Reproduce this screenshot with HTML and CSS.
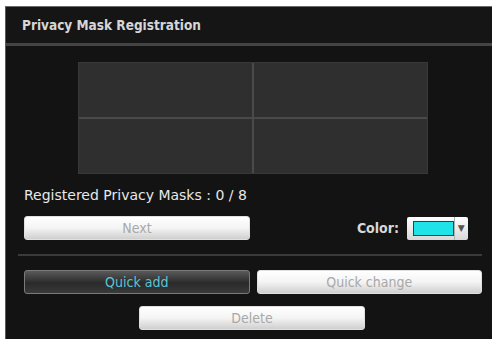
FILE: index.html
```html
<!DOCTYPE html>
<html lang="en">
<head>
    <meta charset="UTF-8">
    <title>Privacy Mask Registration</title>
    <link rel="stylesheet" href="styles.css">
</head>
<body>
    <div class="panel">
        <div class="panel-header">Privacy Mask Registration</div>
        <div class="panel-body">
            <div class="preview">
                <div class="cell"></div>
                <div class="cell"></div>
                <div class="cell"></div>
                <div class="cell"></div>
            </div>

            <div class="count">Registered Privacy Masks : 0 / 8</div>

            <div class="row">
                <button class="btn light wide" disabled>Next</button>
                <div class="color-group">
                    <span class="color-label">Color:</span>
                    <div class="color-select">
                        <span class="swatch"></span>
                        <span class="arrow">&#9660;</span>
                    </div>
                </div>
            </div>

            <div class="divider"></div>

            <div class="row">
                <button class="btn dark wide">Quick add</button>
                <button class="btn light wide" disabled>Quick change</button>
            </div>
            <div class="row center">
                <button class="btn light wide" disabled>Delete</button>
            </div>
        </div>
    </div>
</body>
</html>
```

FILE: styles.css
```css
body {
    margin: 0;
    padding: 6px 0 0 5px;
    background-color: #ffffff;
    font-family: "DejaVu Sans", sans-serif;
}
.panel {
    background-color: #131313;
    border-left: 1px solid #5a5a5a;
    border-top: 1px solid #6a6a6a;
    height: 333px;
    box-sizing: border-box;
}
.panel-header {
    height: 36px;
    line-height: 36px;
    padding-left: 16px;
    font-family: "DejaVu Sans Condensed", sans-serif;
    font-weight: bold;
    font-size: 13.5px;
    color: #d6d6d6;
    background-color: #151515;
    border-bottom: 3px solid #444;
}
.panel-body {
    padding: 16px 10px 0 18px;
}
.preview {
    width: 348px;
    height: 110px;
    margin-left: 54px;
    display: grid;
    grid-template-columns: 1fr 1fr;
    grid-template-rows: 1fr 1fr;
    gap: 2px;
    background-color: #4a4a4a;
    border: 1px solid #383838;
}
.cell {
    background-color: #2f2f2f;
}
.count {
    margin-top: 13px;
    font-size: 14px;
    color: #e8e8e8;
}
.row {
    display: flex;
    align-items: center;
    gap: 7px;
    margin-top: 13px;
}
.row.center {
    justify-content: center;
    margin-top: 12px;
    padding-right: 2px;
}
.btn {
    height: 24px;
    border-radius: 3px;
    font-family: "DejaVu Sans Condensed", sans-serif;
    font-size: 14px;
    padding: 0;
}
.btn.wide {
    width: 226px;
}
.btn.light {
    color: #a8a8a8;
    border: 1px solid #e0e0e0;
    background: linear-gradient(to bottom, #ffffff 0%, #f4f4f4 50%, #cfcfcf 100%);
}
.btn.dark {
    color: #5cc4d6;
    border: 1px solid #7a7a7a;
    background: linear-gradient(to bottom, #5a5a5a 0%, #2a2a2a 55%, #3a3a3a 100%);
}
.color-group {
    margin-left: auto;
    display: flex;
    align-items: center;
    gap: 8px;
    margin-right: 14px;
}
.color-label {
    font-family: "DejaVu Sans Condensed", sans-serif;
    font-size: 14px;
    font-weight: bold;
    color: #d8d8d8;
}
.color-select {
    width: 61px;
    height: 23px;
    box-sizing: border-box;
    display: flex;
    align-items: center;
    background: linear-gradient(to bottom, #ffffff, #d8d8d8);
    border-radius: 2px;
}
.swatch {
    width: 40px;
    height: 13px;
    margin-left: 6px;
    background-color: #1fe3e6;
    border: 1px solid #1a4b55;
}
.arrow {
    margin-left: auto;
    width: 14px;
    height: 100%;
    border-left: 1px solid #b0b0b0;
    font-size: 9px;
    line-height: 23px;
    text-align: center;
    color: #555;
}
.divider {
    height: 2px;
    background-color: #3a3a3a;
    margin: 14px 0 0 -6px;
}
.divider + .row {
    margin-top: 14px;
}
```
